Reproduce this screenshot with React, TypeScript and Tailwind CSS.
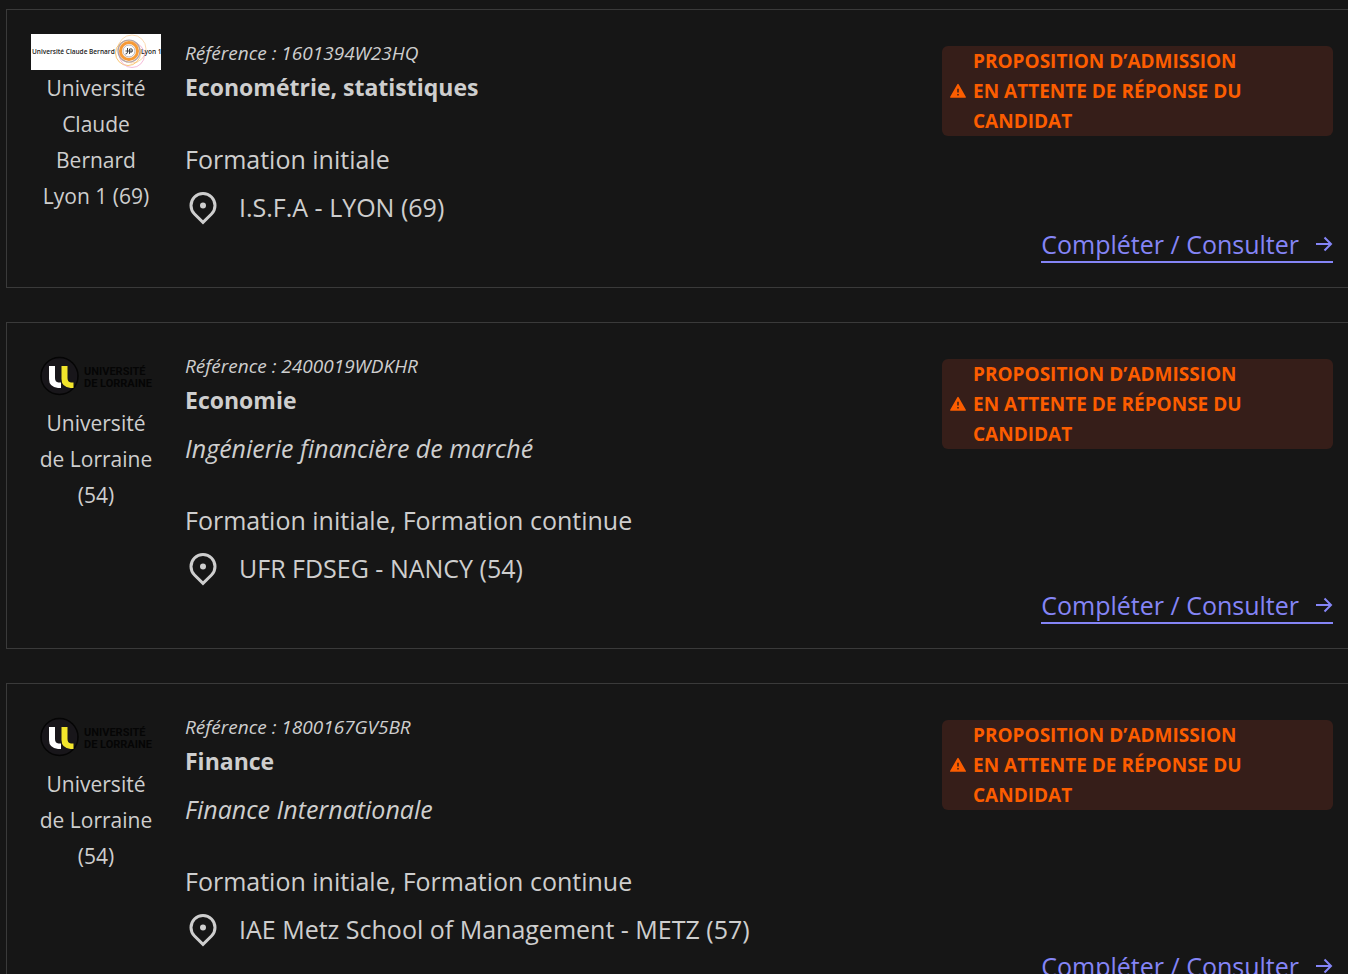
type Wish = {
  reference: string;
  title: string;
  subtitle?: string;
  mode: string;
  place: string;
  university: string[];
  logo: "lyon1" | "lorraine";
};

const wishes: Wish[] = [
  {
    reference: "1601394W23HQ",
    title: "Econométrie, statistiques",
    mode: "Formation initiale",
    place: "I.S.F.A - LYON (69)",
    university: ["Université", "Claude", "Bernard", "Lyon 1 (69)"],
    logo: "lyon1",
  },
  {
    reference: "2400019WDKHR",
    title: "Economie",
    subtitle: "Ingénierie financière de marché",
    mode: "Formation initiale, Formation continue",
    place: "UFR FDSEG - NANCY (54)",
    university: ["Université", "de Lorraine", "(54)"],
    logo: "lorraine",
  },
  {
    reference: "1800167GV5BR",
    title: "Finance",
    subtitle: "Finance Internationale",
    mode: "Formation initiale, Formation continue",
    place: "IAE Metz School of Management - METZ (57)",
    university: ["Université", "de Lorraine", "(54)"],
    logo: "lorraine",
  },
];

export default function App() {
  return (
    <main className="h-screen overflow-hidden bg-[#161616] pt-[9px] pl-1.5 font-['Open_Sans',sans-serif] text-[#cecece]">
      <div className="flex flex-col gap-[34px]">
        {wishes.map((w) => (
          <WishCard key={w.reference} wish={w} />
        ))}
      </div>
    </main>
  );
}

function WishCard({ wish }: { wish: Wish }) {
  return (
    <article className="shrink-0 border-y border-l border-[#3a3a3a] py-6 pr-[15px] pl-6">
      <div className="flex items-start gap-6">
        <div className="w-[130px] shrink-0 text-center text-[21px] leading-9">
          {wish.logo === "lyon1" ? <LyonLogo /> : <LorraineLogo />}
          {wish.university.map((line) => (
            <p key={line}>{line}</p>
          ))}
        </div>

        <div className="min-w-0 flex-1 text-[25px] leading-9">
          <p className="pt-[3px] text-[19px] leading-8 font-medium italic">
            Référence : {wish.reference}
          </p>
          <h2 className="text-[23px] leading-9 font-bold">{wish.title}</h2>
          {wish.subtitle && <p className="pt-3 italic">{wish.subtitle}</p>}
          <p className="pt-9">{wish.mode}</p>
          <p className="flex items-center gap-[18px] pt-3">
            <PinIcon />
            {wish.place}
          </p>
        </div>

        <p className="mt-3 flex w-[391px] shrink-0 items-center gap-1.5 rounded-md bg-[#361e19] px-[7px] text-[19px] leading-[30px] font-bold text-[#fc5d00] uppercase">
          <WarningIcon />
          <span>
            Proposition d’admission
            <br />
            en attente de réponse du candidat
          </span>
        </p>
      </div>

      <div className="flex justify-end pt-0.5">
        <a
          href="#"
          className="flex items-center gap-4 border-b-2 border-[#8585f6] text-[25px] leading-[34px] text-[#8585f6]"
        >
          Compléter / Consulter
          <ArrowIcon />
        </a>
      </div>
    </article>
  );
}

function PinIcon() {
  return (
    <svg className="size-9 shrink-0" viewBox="0 0 24 24" fill="currentColor" aria-hidden="true">
      <path d="m12 20.9 4.95-4.95a7 7 0 1 0-9.9 0L12 20.9Zm0 2.83-6.364-6.364a9 9 0 1 1 12.728 0L12 23.728Z" />
      <circle cx="12" cy="11" r="2" />
    </svg>
  );
}

function WarningIcon() {
  return (
    <svg className="size-[18px] shrink-0" viewBox="0 0 24 24" fill="currentColor" aria-hidden="true">
      <path d="m12.866 3 9.526 16.5a1 1 0 0 1-.866 1.5H2.474a1 1 0 0 1-.866-1.5L11.134 3a1 1 0 0 1 1.732 0ZM11 16v2h2v-2h-2Zm0-7v5h2V9h-2Z" />
    </svg>
  );
}

function ArrowIcon() {
  return (
    <svg className="size-[18px] shrink-0" viewBox="0 0 18 18" fill="none" stroke="currentColor" strokeWidth="2" aria-hidden="true">
      <path d="M1 9h15M9.5 2.5 16 9l-6.5 6.5" />
    </svg>
  );
}

function LyonLogo() {
  return (
    <svg
      className="block h-9 w-full bg-white font-['Open_Sans',sans-serif]"
      viewBox="0 0 130 36"
      role="img"
      aria-label="Université Claude Bernard Lyon 1"
    >
      <g fill="none">
        <circle cx="101" cy="15" r="14" stroke="#fbcf9c" strokeWidth="0.8" />
        <circle cx="97" cy="19" r="12.5" stroke="#f9b64c" strokeWidth="0.8" />
        <circle cx="101" cy="21" r="12.5" stroke="#f3a9cf" strokeWidth="0.8" />
        <circle cx="98" cy="17" r="11" stroke="#b3a3a6" strokeWidth="1.2" />
        <circle cx="98" cy="17" r="8.5" stroke="#f79a35" strokeWidth="3" />
        <circle cx="98" cy="17" r="6" stroke="#b9b4b8" strokeWidth="1" />
        <path d="M96.500 14v4q0 2-2 2M98.500 20v-5q3-1 3 1.500t-3 1.500M94.500 17h7" stroke="#444" />
      </g>
      <g fill="#222" fontSize="6.5" fontWeight="600">
        <text x="1" y="20">Université Claude Bernard</text>
        <text x="110" y="20">Lyon 1</text>
      </g>
    </svg>
  );
}

function LorraineLogo() {
  return (
    <svg
      className="block h-[58px] w-full font-['Roboto',sans-serif]"
      viewBox="0 0 130 58"
      role="img"
      aria-label="Université de Lorraine"
    >
      <circle cx="28.5" cy="29" r="18.5" fill="#18161a" stroke="#050505" strokeWidth="1.5" />
      <path d="M18 19h6v12q0 4 3.500 4.500h2.500v5.500h-3q-9-1-9-9Z" fill="#fff" />
      <path d="M30.500 19h6v12q0 4 3.500 4.500h2.500v5.500h-3q-9-1-9-9Z" fill="#f2e52b" />
      <g fill="#050505" fontSize="11" fontWeight="700">
        <text x="53" y="28">UNIVERSITÉ</text>
        <text x="53" y="40">DE LORRAINE</text>
      </g>
    </svg>
  );
}
